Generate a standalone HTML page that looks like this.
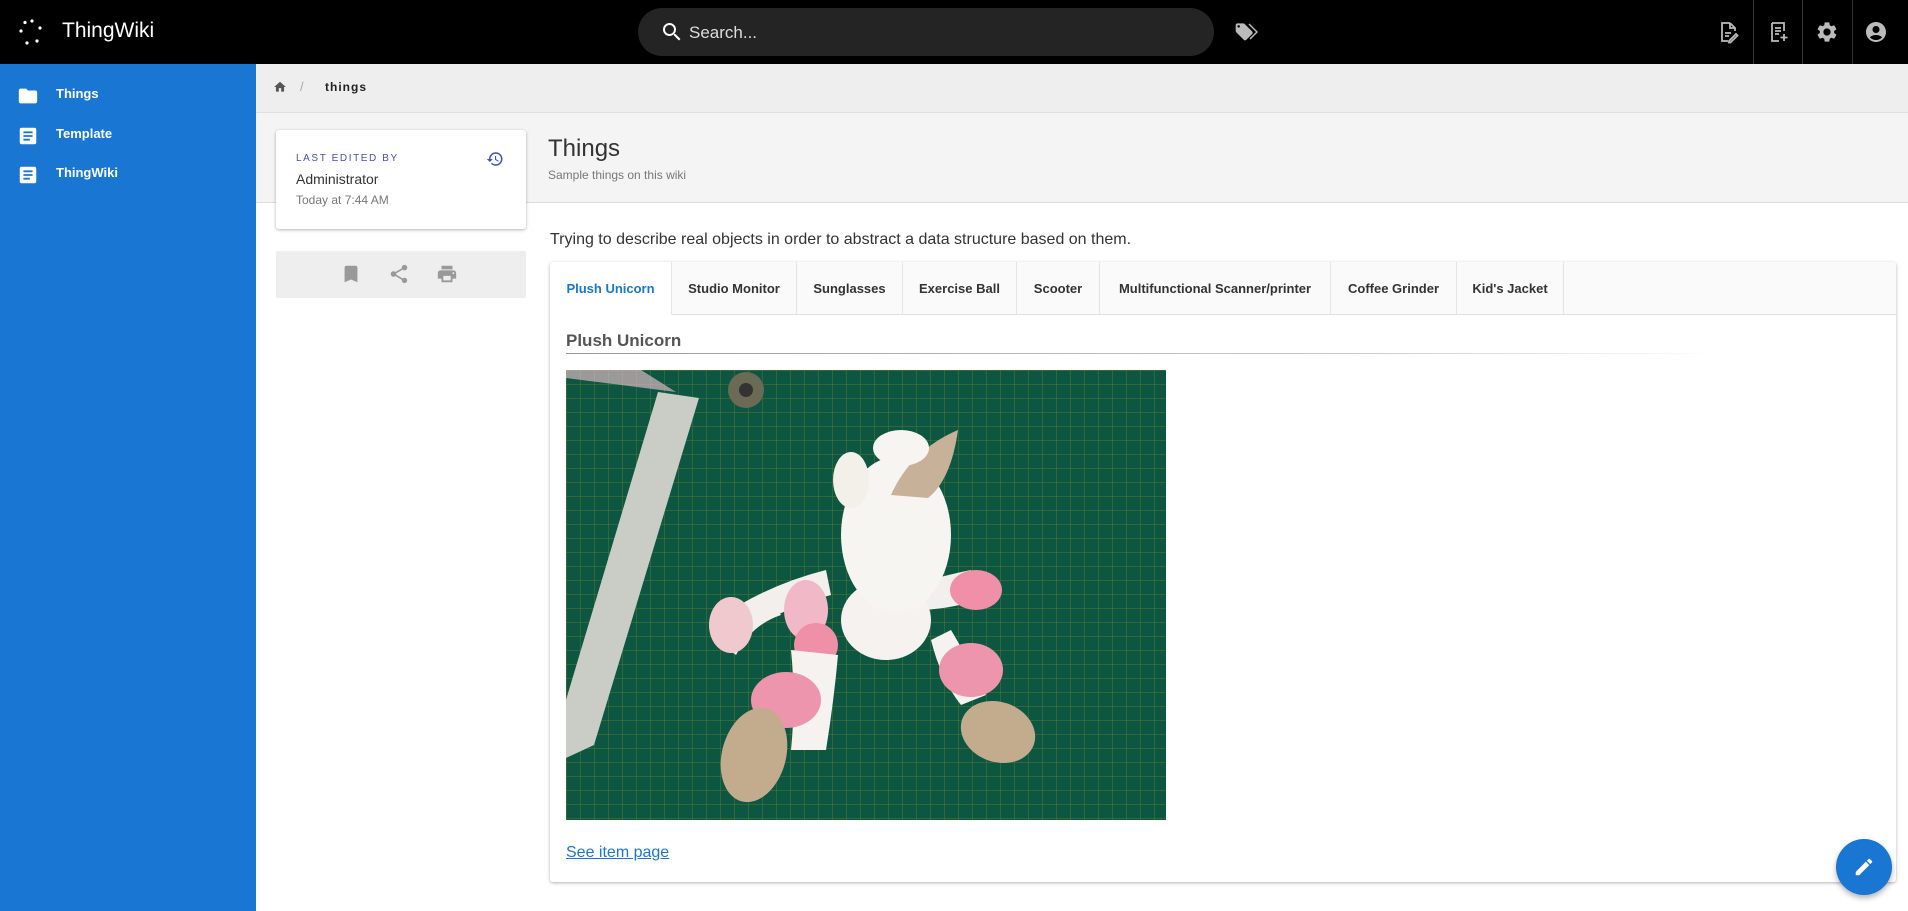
<!DOCTYPE html>
<html><head><meta charset="utf-8"><style>
*{box-sizing:border-box;margin:0;padding:0}
body{width:1908px;height:911px;overflow:hidden;font-family:"Liberation Sans",sans-serif;background:#fff;position:relative;color:#333}
.abs{position:absolute}
#hdr{left:0;top:0;width:1908px;height:64px;background:#000}
#side{left:0;top:64px;width:256px;height:847px;background:#1976d2}
.si{position:absolute;left:0;width:256px;color:#fff;font-size:13px;font-weight:bold}
.si svg{position:absolute;left:17px;top:-9px}
.si span{position:absolute;left:56px;top:-8px}
#bc{left:256px;top:64px;width:1652px;height:49px;background:#eee;border-bottom:1px solid #e0e0e0}
#ph{left:256px;top:113px;width:1652px;height:90px;background:#f4f4f4;border-bottom:1px solid #ddd}
.card{background:#fff;border-radius:3px;box-shadow:0 1px 3px rgba(0,0,0,.3)}
.tab{position:absolute;top:0;height:53px;line-height:53px;text-align:center;font-size:13px;font-weight:bold;color:#333;border-right:1px solid #e6e6e6;background:#fafafa;border-bottom:1px solid #e0e0e0}
</style></head><body>
<div id="hdr" class="abs">
  <svg class="abs" style="left:18px;top:18px" width="28" height="28" viewBox="0 0 28 28" fill="#fff">
    <circle cx="7" cy="4.5" r="1.6"/><circle cx="14" cy="3" r="1.6"/><circle cx="22" cy="10" r="1.6"/><circle cx="3" cy="13" r="1.6"/><circle cx="19" cy="23" r="1.6"/><circle cx="9" cy="25" r="1.6"/>
  </svg>
  <div class="abs" style="left:62px;top:19px;color:#fff;font-size:21px">ThingWiki</div>
  <div class="abs" style="left:638px;top:8px;width:576px;height:48px;border-radius:24px;background:#242424"></div>
  <svg class="abs" style="left:660px;top:20px" width="24" height="24" viewBox="0 0 24 24" fill="#fff"><path d="M15.5 14h-.79l-.28-.27A6.47 6.47 0 0016 9.5 6.5 6.5 0 109.5 16c1.61 0 3.09-.59 4.23-1.57l.27.28v.79l5 4.99L20.49 19l-4.99-5zm-6 0C7.01 14 5 11.99 5 9.5S7.01 5 9.5 5 14 7.01 14 9.5 11.99 14 9.5 14z"/></svg>
  <div class="abs" style="left:689px;top:23px;color:#ddd;font-size:17px">Search...</div>
  <svg class="abs" style="left:1234px;top:20px" width="24" height="24" viewBox="0 0 24 24" fill="#bbb"><path d="M21.41 11.58l-9-9C12.05 2.22 11.55 2 11 2H4c-1.1 0-2 .9-2 2v7c0 .55.22 1.05.59 1.42l9 9c.36.36.86.58 1.41.58s1.05-.22 1.41-.59l7-7c.37-.36.59-.86.59-1.41s-.23-1.06-.59-1.42zM5.5 7C4.67 7 4 6.33 4 5.5S4.67 4 5.5 4 7 4.67 7 5.5 6.33 7 5.5 7z" transform="scale(.85) translate(0 2)"/><path d="M15 4l8 8-7 7" stroke="#bbb" stroke-width="1.5" fill="none"/></svg>
  <div class="abs" style="left:1753px;top:0;width:1px;height:64px;background:#333"></div>
  <div class="abs" style="left:1802px;top:0;width:1px;height:64px;background:#333"></div>
  <div class="abs" style="left:1852px;top:0;width:1px;height:64px;background:#333"></div>
  <svg class="abs" style="left:1716px;top:20px" width="24" height="24" viewBox="0 0 24 24" fill="none" stroke="#bbb" stroke-width="1.8"><path d="M14 3H6v18h6M14 3l5 5v3M14 3v5h5M9 13h6M9 16h4M13 21l7-7 1.5 1.5-7 7H13z"/></svg>
  <svg class="abs" style="left:1766px;top:20px" width="24" height="24" viewBox="0 0 24 24" fill="none" stroke="#bbb" stroke-width="1.8"><path d="M6 3h12v8M6 3v18h7M9 8h6M9 11h6M9 14h4M18 14v7M14.5 17.5h7"/></svg>
  <svg class="abs" style="left:1815px;top:20px" width="24" height="24" viewBox="0 0 24 24" fill="#bbb"><path d="M19.14 12.94c.04-.3.06-.61.06-.94 0-.32-.02-.64-.07-.94l2.03-1.58a.49.49 0 00.12-.61l-1.920-3.32a.488.488 0 00-.59-.22l-2.39.96c-.5-.38-1.030-.7-1.62-.94l-.36-2.54a.484.484 0 00-.48-.41h-3.84c-.24 0-.43.17-.47.41l-.36 2.54c-.59.24-1.13.57-1.62.94l-2.39-.96c-.22-.08-.47 0-.59.22L2.74 8.87c-.12.21-.08.47.12.61l2.03 1.58c-.05.3-.09.63-.09.94s.02.64.07.94l-2.03 1.58a.49.49 0 00-.12.61l1.92 3.32c.12.22.37.29.59.22l2.39-.96c.5.38 1.03.7 1.62.94l.36 2.54c.05.24.24.41.48.41h3.84c.24 0 .44-.17.47-.41l.36-2.54c.59-.24 1.13-.56 1.62-.94l2.39.96c.22.08.47 0 .59-.22l1.92-3.32c.12-.22.07-.47-.12-.61l-2.01-1.58zM12 15.6c-1.98 0-3.6-1.62-3.6-3.6s1.62-3.6 3.6-3.6 3.6 1.62 3.6 3.6-1.62 3.6-3.6 3.6z"/></svg>
  <svg class="abs" style="left:1864px;top:20px" width="24" height="24" viewBox="0 0 24 24" fill="#bbb"><path d="M12 2C6.48 2 2 6.48 2 12s4.48 10 10 10 10-4.48 10-10S17.52 2 12 2zm0 4c1.93 0 3.5 1.57 3.5 3.5S13.93 13 12 13s-3.5-1.57-3.5-3.5S10.07 6 12 6zm0 14c-2.03 0-4.43-.82-6.14-2.88a9.947 9.947 0 0112.28 0C16.43 19.18 14.030 20 12 20z"/></svg>
</div>
<div id="side" class="abs">
  <div class="si" style="top:30px"><svg width="22" height="22" viewBox="0 0 24 24" fill="#fff"><path d="M10 4H4c-1.1 0-2 .9-2 2v12c0 1.1.9 2 2 2h16c1.1 0 2-.9 2-2V8c0-1.1-.9-2-2-2h-8l-2-2z"/></svg><span>Things</span></div>
  <div class="si" style="top:70px"><svg width="22" height="22" viewBox="0 0 24 24"><rect x="3" y="3" width="18" height="18" rx="2" fill="#fff"/><path d="M7 8h10M7 12h10M7 16h7" stroke="#1976d2" stroke-width="2"/></svg><span>Template</span></div>
  <div class="si" style="top:109px"><svg width="22" height="22" viewBox="0 0 24 24"><rect x="3" y="3" width="18" height="18" rx="2" fill="#fff"/><path d="M7 8h10M7 12h10M7 16h7" stroke="#1976d2" stroke-width="2"/></svg><span>ThingWiki</span></div>
</div>
<div id="bc" class="abs">
  <svg class="abs" style="left:17px;top:16px" width="14" height="14" viewBox="0 0 24 24" fill="#555"><path d="M10 20v-6h4v6h5v-8h3L12 3 2 12h3v8z"/></svg>
  <div class="abs" style="left:44px;top:15px;color:#aaa;font-size:13px">/</div>
  <div class="abs" style="left:69px;top:16px;font-size:12px;letter-spacing:1px;color:#222;font-weight:bold">things</div>
</div>
<div id="ph" class="abs">
  <div class="abs" style="left:292px;top:22px;font-size:24px;color:#333">Things</div>
  <div class="abs" style="left:292px;top:55px;font-size:12px;color:#777">Sample things on this wiki</div>
</div>
<div class="abs card" style="left:276px;top:130px;width:250px;height:99px">
  <div class="abs" style="left:20px;top:23px;font-size:10px;letter-spacing:1.6px;color:#3f51b5">LAST EDITED BY</div>
  <svg class="abs" style="left:210px;top:20px" width="18" height="18" viewBox="0 0 24 24" fill="#3f51b5"><path d="M13 3a9 9 0 00-9 9H1l3.89 3.89.07.14L9 12H6c0-3.87 3.13-7 7-7s7 3.13 7 7-3.13 7-7 7c-1.93 0-3.68-.79-4.94-2.06l-1.42 1.42A8.954 8.954 0 0013 21a9 9 0 000-18zm-1 5v5l4.28 2.54.72-1.21-3.5-2.08V8H12z"/></svg>
  <div class="abs" style="left:20px;top:41px;font-size:14px;color:#333">Administrator</div>
  <div class="abs" style="left:20px;top:63px;font-size:12px;color:#777">Today at 7:44 AM</div>
</div>
<div class="abs" style="left:276px;top:251px;width:250px;height:47px;background:#eee;border-radius:2px">
  <svg class="abs" style="left:64px;top:12px" width="22" height="22" viewBox="0 0 24 24" fill="#999"><path d="M17 3H7c-1.1 0-2 .9-2 2v16l7-3 7 3V5c0-1.1-.9-2-2-2z"/></svg>
  <svg class="abs" style="left:112px;top:12px" width="22" height="22" viewBox="0 0 24 24" fill="#999"><path d="M18 16.08c-.76 0-1.44.3-1.96.77L8.91 12.7c.05-.23.09-.46.09-.7s-.04-.47-.09-.7l7.05-4.11c.54.5 1.25.81 2.04.81 1.66 0 3-1.34 3-3s-1.34-3-3-3-3 1.34-3 3c0 .24.04.47.09.7L8.04 9.81C7.5 9.31 6.79 9 6 9c-1.66 0-3 1.34-3 3s1.34 3 3 3c.79 0 1.5-.31 2.04-.81l7.12 4.16c-.05.21-.08.43-.08.65 0 1.61 1.31 2.92 2.92 2.92 1.61 0 2.92-1.31 2.92-2.92s-1.31-2.92-2.92-2.92z"/></svg>
  <svg class="abs" style="left:160px;top:12px" width="22" height="22" viewBox="0 0 24 24" fill="#999"><path d="M19 8H5c-1.66 0-3 1.34-3 3v6h4v4h12v-4h4v-6c0-1.66-1.34-3-3-3zm-3 11H8v-5h8v5zm3-7c-.55 0-1-.45-1-1s.45-1 1-1 1 .45 1 1-.45 1-1 1zm-1-9H6v4h12V3z"/></svg>
</div>
<div class="abs" style="left:550px;top:231px;font-size:16px;color:#333">Trying to describe real objects in order to abstract a data structure based on them.</div>
<div class="abs card" style="left:550px;top:262px;width:1346px;height:620px;overflow:hidden">
  <div class="abs" style="left:0;top:0;width:1346px;height:53px;background:#fafafa;border-bottom:1px solid #e0e0e0"></div>
  <div class="tab" style="left:0;width:122px;background:#fff;color:#1976d2;border-bottom:1px solid #fff">Plush Unicorn</div>
  <div class="tab" style="left:122px;width:125px">Studio Monitor</div>
  <div class="tab" style="left:247px;width:106px">Sunglasses</div>
  <div class="tab" style="left:353px;width:114px">Exercise Ball</div>
  <div class="tab" style="left:467px;width:83px">Scooter</div>
  <div class="tab" style="left:550px;width:231px">Multifunctional Scanner/printer</div>
  <div class="tab" style="left:781px;width:126px">Coffee Grinder</div>
  <div class="tab" style="left:907px;width:107px">Kid's Jacket</div>
  <div class="abs" style="left:16px;top:69px;font-size:17px;font-weight:bold;color:#555">Plush Unicorn</div>
  <div class="abs" style="left:16px;top:91px;width:1150px;height:1px;background:linear-gradient(90deg,#999,#ccc 70%,rgba(255,255,255,0))"></div>
  <svg class="abs" style="left:16px;top:108px" width="600" height="450" viewBox="0 0 600 450">
    <defs><pattern id="g" width="14" height="14" patternUnits="userSpaceOnUse"><rect width="14" height="14" fill="#0e5a44"/><path d="M0 0H14M0 0V14" stroke="#6f8a2a" stroke-width="1"/></pattern></defs>
    <rect width="600" height="450" fill="url(#g)"/>
    <rect width="600" height="450" fill="#0c4d3a" opacity=".25"/>
    <path d="M92 22L133 28 28 375 0 388 0 330Z" fill="#c9cdc6"/>
    <path d="M0 0L75 0 110 22 0 8Z" fill="#d7b8c2" opacity=".7"/>
    <ellipse cx="180" cy="20" rx="18" ry="18" fill="#6b6b55"/><ellipse cx="180" cy="20" rx="7" ry="7" fill="#333"/>
    <path d="M150 270Q165 240 200 225L215 245Q185 255 170 285Z" fill="#f3efec"/>
    <path d="M150 250Q200 215 260 200L265 225Q210 240 170 270Z" fill="#f3efec"/>
    <ellipse cx="165" cy="255" rx="22" ry="28" fill="#f0c9cf"/>
    <path d="M345 215Q380 205 405 200L412 230Q380 240 350 240Z" fill="#f2efec"/>
    <ellipse cx="410" cy="220" rx="26" ry="20" fill="#ef8fa8"/>
    <ellipse cx="240" cy="240" rx="22" ry="30" fill="#f1b9c7"/>
    <ellipse cx="250" cy="275" rx="22" ry="22" fill="#ef8fa8"/>
    <ellipse cx="320" cy="250" rx="45" ry="40" fill="#f5f2ef"/>
    <ellipse cx="330" cy="165" rx="55" ry="78" fill="#f7f5f2"/>
    <ellipse cx="285" cy="110" rx="18" ry="28" fill="#f3efe9"/>
    <path d="M325 125Q345 80 392 60Q385 110 362 128Z" fill="#c7b198"/>
    <ellipse cx="335" cy="78" rx="28" ry="18" fill="#f7f5f2"/>
    <path d="M225 280Q230 330 225 380L260 380Q268 330 272 285Z" fill="#f5f2ef"/>
    <path d="M365 270Q375 310 395 335L420 325Q400 285 385 260Z" fill="#f5f2ef"/>
    <ellipse cx="220" cy="330" rx="35" ry="28" fill="#ed95ad"/>
    <ellipse cx="405" cy="300" rx="32" ry="27" fill="#ed95ad"/>
    <ellipse cx="188" cy="385" rx="32" ry="48" fill="#c3ab8e" transform="rotate(15 188 385)"/>
    <ellipse cx="432" cy="362" rx="38" ry="30" fill="#c3ab8e" transform="rotate(20 432 362)"/>
  </svg>
  <div class="abs" style="left:16px;top:582px;font-size:16px;color:#1976d2;text-decoration:underline">See item page</div>
</div>
<div class="abs" style="left:1836px;top:839px;width:56px;height:56px;border-radius:50%;background:#1976d2;box-shadow:0 3px 6px rgba(0,0,0,.3)">
  <svg class="abs" style="left:17px;top:17px" width="22" height="22" viewBox="0 0 24 24" fill="#fff"><path d="M3 17.25V21h3.75L17.81 9.94l-3.75-3.75L3 17.25zM20.71 7.04a1 1 0 000-1.41l-2.34-2.34a1 1 0 00-1.41 0l-1.83 1.83 3.75 3.75 1.83-1.83z"/></svg>
</div>
</body></html>
